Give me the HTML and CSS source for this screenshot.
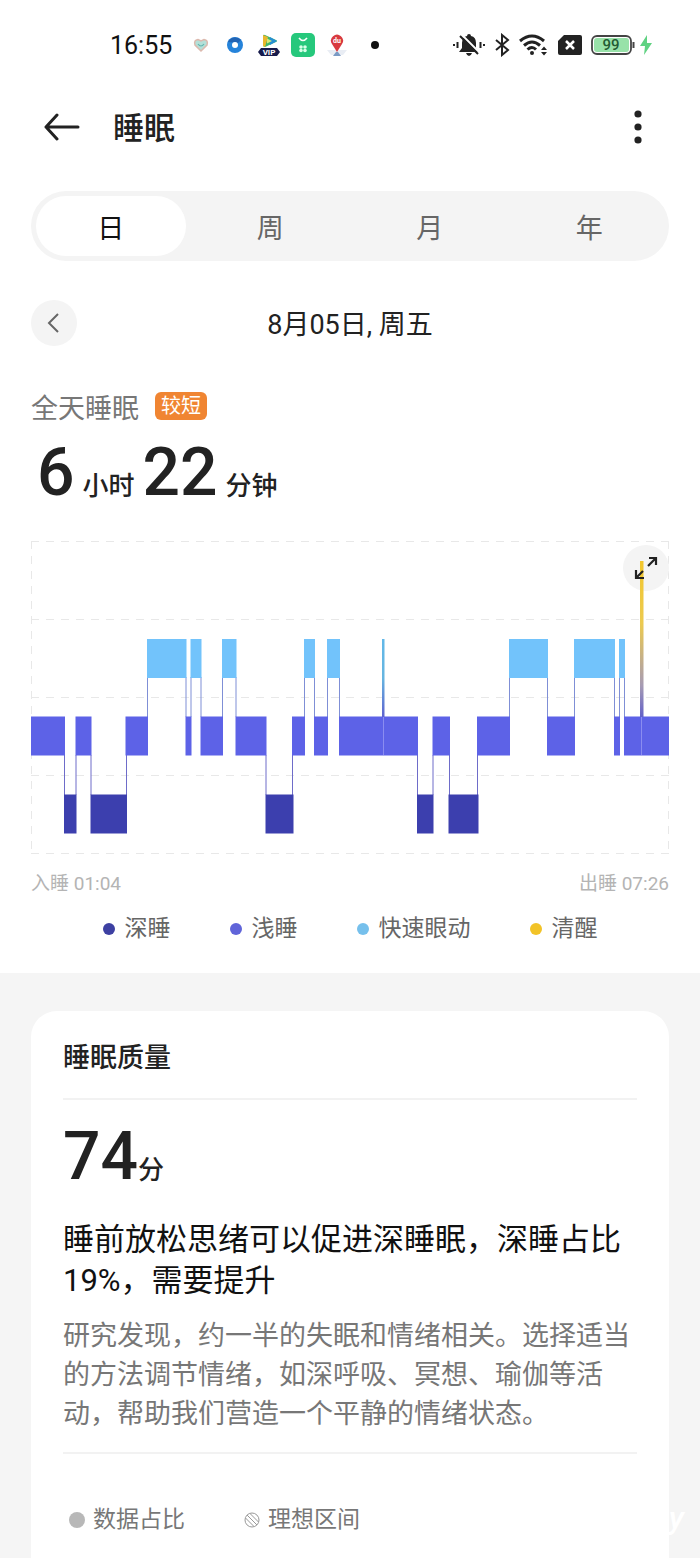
FILE: index.html
```
<!DOCTYPE html>
<html lang="zh-CN">
<head>
    <meta charset="UTF-8">
    <meta name="viewport" content="width=device-width, initial-scale=1.0">
    <title>睡眠</title>
    <link rel="stylesheet" href="styles.css">
</head>
<body>
    <div class="page">
        <section class="overview">
            <div class="status-bar">
                <span class="clock">16:55</span>
                <div class="app-icons">
                    <svg width="24" height="24" viewBox="0 0 24 24">
                        <path d="M12 18 L6 12 Q4.500 7 9 6.500 L12 8 L15 6.500 Q19.500 7 18 12 Z" fill="#b4e0d8" stroke="#dcb9ae" stroke-width="1.500"/>
                        <path d="M9 11 Q12 15 15 11" fill="none" stroke="#62b5ae" stroke-width="1.200"/>
                    </svg>
                    <svg width="24" height="24" viewBox="0 0 24 24">
                        <circle cx="12" cy="12" r="8" fill="#2583da"/>
                        <path d="M5 9 A8 8 0 0 1 18 7 L15 10 Z" fill="#2264b4"/>
                        <circle cx="12" cy="12" r="3" fill="#fff"/>
                    </svg>
                    <svg width="24" height="24" viewBox="0 0 24 24">
                        <path d="M6 3 Q6 1 8 2 L19 7 Q21 8 19 9 L8 14 Q6 14 6 12 Z" fill="#3fb56a"/>
                        <path d="M6 2 L11 4 L8 14 L6 13 Z" fill="#e9b72c"/>
                        <path d="M13 4 L20 8 L13 12 Z" fill="#268fd2"/>
                        <path d="M10 5.500 L15 8 L10 10.500 Z" fill="#d3e87c"/>
                        <path d="M4 15 H20 L23 19 L20 23 H4 L1 19 Z" fill="#171b4b"/>
                        <text x="12" y="22" class="vip-text">VIP</text>
                    </svg>
                    <svg width="24" height="24" viewBox="0 0 24 24">
                        <rect x="0" y="0" width="24" height="24" rx="5" fill="#26c87c"/>
                        <path d="M8 5 Q12 10 16 5" fill="none" stroke="#fff" stroke-width="1.600"/>
                        <g fill="#d8ffe9">
                            <circle cx="10" cy="14" r="1.800"/><circle cx="14" cy="14" r="1.800"/>
                            <circle cx="10" cy="17.500" r="1.800"/><circle cx="14" cy="17.500" r="1.800"/>
                        </g>
                    </svg>
                    <svg width="24" height="24" viewBox="0 0 24 24">
                        <path d="M2 17 L22 17 L18 22 H6 Z" fill="#e9edf4"/>
                        <path d="M12 19 L7 11 A6 6 0 1 1 17 11 Z" fill="#d83a40"/>
                        <path d="M8 23 L11 19 H13 L16 23 Z" fill="#7a9ac4"/>
                        <text x="12" y="10" class="pin-text">du</text>
                    </svg>
                </div>
                <span class="more-dot"></span>
                <div class="system-icons">
                    <svg width="32" height="24" viewBox="0 0 32 24" fill="#222">
                        <path d="M6 19 L9 15 V10 Q9 4 14 3 Q14 1 16 1 Q18 1 18 3 Q23 4 23 10 V15 L26 19 Z M13 20 H19 Q18 23 16 23 Q14 23 13 20 Z"/>
                        <path d="M9 2 L27 20" stroke="#fff" stroke-width="2"/>
                        <path d="M7 3 L25 21 M1 11 V13 M4.500 9 V15 M27.500 9 V15 M31 11 V13" stroke="#222" stroke-width="2" fill="none"/>
                    </svg>
                    <svg width="16" height="24" viewBox="0 0 16 24" fill="none" stroke="#222" stroke-width="2">
                        <path d="M2 7 L14 17 L8 22 V2 L14 7 L2 17"/>
                    </svg>
                    <svg width="30" height="24" viewBox="0 0 30 24" fill="none" stroke="#222" stroke-width="3">
                        <path d="M1 8 Q13 -2 25 8 M5 12.500 Q13 5.500 21 12.500 M8.500 16.500 Q13 12.500 17 16.500"/>
                        <circle cx="13" cy="20" r="2" fill="#222" stroke="none"/>
                        <path d="M22 17 L25 13.500 L28 17 Z M22 19 L25 22.500 L28 19 Z" fill="#222" stroke="none"/>
                    </svg>
                    <svg width="24" height="24" viewBox="0 0 24 24">
                        <path d="M6 2 H22 Q24 2 24 4 V20 Q24 22 22 22 H2 Q0 22 0 20 V8 Z" fill="#222"/>
                        <path d="M8 8 L16 16 M16 8 L8 16" stroke="#fff" stroke-width="2.500"/>
                    </svg>
                    <svg class="battery" width="44" height="24" viewBox="0 0 44 24">
                        <rect x="1" y="3" width="39" height="18" rx="5" fill="#fff" stroke="#444" stroke-width="1.800"/>
                        <rect x="3" y="5" width="35" height="14" rx="3" fill="#98e2a9"/>
                        <path d="M42.500 9 V15" stroke="#444" stroke-width="2"/>
                        <text x="20" y="17" class="battery-text">99</text>
                    </svg>
                    <svg width="14" height="24" viewBox="0 0 14 24">
                        <path d="M8 2 L1 13 H6 L5 22 L13 10 H8 Z" fill="#60d282"/>
                    </svg>
                </div>
            </div>

            <header class="top-bar">
                <button class="icon-button" aria-label="返回">
                    <svg width="36" height="30" viewBox="0 0 36 30" fill="none" stroke="#222" stroke-width="3" stroke-linecap="round" stroke-linejoin="round">
                        <path d="M34 15 H2 M13 3 L2 15 L13 27"/>
                    </svg>
                </button>
                <h1>睡眠</h1>
                <button class="icon-button" aria-label="更多">
                    <svg width="10" height="34" viewBox="0 0 10 34" fill="#222">
                        <circle cx="5" cy="4" r="3.600"/><circle cx="5" cy="17" r="3.600"/><circle cx="5" cy="30" r="3.600"/>
                    </svg>
                </button>
            </header>

            <nav class="tabs">
                <button class="tab active">日</button>
                <button class="tab">周</button>
                <button class="tab">月</button>
                <button class="tab">年</button>
            </nav>

            <div class="date-row">
                <button class="round-button" aria-label="前一天">
                    <svg width="14" height="20" viewBox="0 0 14 20" fill="none" stroke="#666" stroke-width="2">
                        <path d="M11 1 L2 10 L11 19"/>
                    </svg>
                </button>
                <span class="date">8月05日, 周五</span>
            </div>

            <div class="total-label">
                <span>全天睡眠</span>
                <span class="badge">较短</span>
            </div>
            <p class="total-time"><b>6</b><span>小时</span><b>22</b><span>分钟</span></p>

            <div class="chart">
                <svg class="chart-svg" viewBox="0 0 638 313">
                    <defs>
                        <linearGradient id="awakeLine" x1="0" y1="0" x2="0" y2="1">
                            <stop offset="0" stop-color="#f2c62c"/>
                            <stop offset="0.400" stop-color="#ecca50"/>
                            <stop offset="0.800" stop-color="#a69bb4"/>
                            <stop offset="1" stop-color="#6260c8"/>
                        </linearGradient>
                        <linearGradient id="remLine" x1="0" y1="0" x2="0" y2="1">
                            <stop offset="0" stop-color="#62b8e8"/>
                            <stop offset="0.500" stop-color="#66b5e0"/>
                            <stop offset="1" stop-color="#5e62cf"/>
                        </linearGradient>
                    </defs>
                    <path class="grid-line" d="M0 0.500 H638 M0 78.500 H638 M0 156.500 H638 M0 234.500 H638 M0 312.500 H638"/>
                    <path class="grid-line" d="M0.500 0 V313 M637.500 0 V313"/>
                    <!-- transitions between stages -->
                    <path class="link" d="M33.500 214 V254 M45 214 V254 M60 214 V254 M95.500 214 V254 M235 214 V254 M261.500 214 V254 M386.500 214 V254 M402 214 V254 M418.500 214 V254 M446.500 214 V254"/>
                    <path class="link rem-link" d="M116.500 136 V176 M155 136 V176 M160 136 V176 M170 136 V176 M191.500 136 V176 M205 136 V176 M273.500 136 V176 M283.500 136 V176 M296.500 136 V176 M308.500 136 V176 M478.500 136 V176 M516.500 136 V176 M543.500 136 V176 M583.500 136 V176 M588.500 136 V176 M593.500 136 V176"/>
                    <g class="rem">
                        <rect x="116" y="98" width="39.500" height="39"/>
                        <rect x="159.500" y="98" width="11" height="39"/>
                        <rect x="191" y="98" width="14.500" height="39"/>
                        <rect x="273" y="98" width="11" height="39"/>
                        <rect x="296" y="98" width="13" height="39"/>
                        <rect x="478" y="98" width="39" height="39"/>
                        <rect x="543" y="98" width="41" height="39"/>
                        <rect x="588" y="98" width="6" height="39"/>
                    </g>
                    <g class="light">
                        <rect x="0" y="175.500" width="34" height="39"/>
                        <rect x="44.500" y="175.500" width="16" height="39"/>
                        <rect x="94.500" y="175.500" width="22.500" height="39"/>
                        <rect x="154.500" y="175.500" width="6" height="39"/>
                        <rect x="169.500" y="175.500" width="22.500" height="39"/>
                        <rect x="204.500" y="175.500" width="31" height="39"/>
                        <rect x="261" y="175.500" width="13" height="39"/>
                        <rect x="283" y="175.500" width="14" height="39"/>
                        <rect x="308" y="175.500" width="79" height="39"/>
                        <rect x="401.500" y="175.500" width="17.500" height="39"/>
                        <rect x="446" y="175.500" width="33" height="39"/>
                        <rect x="516" y="175.500" width="28" height="39"/>
                        <rect x="583" y="175.500" width="6" height="39"/>
                        <rect x="593" y="175.500" width="45" height="39"/>
                    </g>
                    <g class="deep">
                        <rect x="33" y="253.500" width="12.500" height="39"/>
                        <rect x="59.500" y="253.500" width="36.500" height="39"/>
                        <rect x="234.500" y="253.500" width="28" height="39"/>
                        <rect x="386" y="253.500" width="16.500" height="39"/>
                        <rect x="417.500" y="253.500" width="30" height="39"/>
                    </g>
                    <rect x="351" y="98" width="2.500" height="78" fill="url(#remLine)"/>
                    <path d="M352.500 176 V214 M610.500 176 V214" stroke="#8a8cf0"/>
                    <circle cx="615" cy="27" r="23" fill="#f4f4f4"/>
                    <rect x="609" y="20" width="3.500" height="156" fill="url(#awakeLine)"/>
                </svg>
                <button class="expand" aria-label="全屏">
                    <svg width="24" height="24" viewBox="0 0 24 24" fill="none" stroke="#222" stroke-width="2.200">
                        <path d="M14 10 L22 2 M15 2 H22 V9 M9 15 L2 22 M2 14 V22 H10"/>
                    </svg>
                </button>
            </div>
            <div class="axis">
                <span>入睡 01:04</span>
                <span>出睡 07:26</span>
            </div>
            <ul class="legend">
                <li><i class="dot dot-deep"></i>深睡</li>
                <li><i class="dot dot-light"></i>浅睡</li>
                <li><i class="dot dot-rem"></i>快速眼动</li>
                <li><i class="dot dot-awake"></i>清醒</li>
            </ul>
        </section>

        <section class="quality">
            <h2>睡眠质量</h2>
            <p class="score"><b>74</b><span>分</span></p>
            <h3>睡前放松思绪可以促进深睡眠，深睡占比19%，需要提升</h3>
            <p class="advice">研究发现，约一半的失眠和情绪相关。选择适当的方法调节情绪，如深呼吸、冥想、瑜伽等活动，帮助我们营造一个平静的情绪状态。</p>
            <ul class="ratio-legend">
                <li><i class="dot dot-data"></i>数据占比</li>
                <li>
                    <svg width="16" height="16" viewBox="0 0 16 16" fill="none" stroke="#999" stroke-width="1">
                        <circle cx="8" cy="8" r="7"/>
                        <path d="M1.500 6 L10 14.500 M3 3 L13 13 M6 1.500 L14.500 10"/>
                    </svg>
                    理想区间
                </li>
            </ul>
        </section>
        <span class="watermark">y</span>
    </div>
</body>
</html>
```
FILE: styles.css
```
* {
    box-sizing: border-box;
}
body {
    margin: 0;
    background-color: #f5f5f5;
    color: #222;
    font-family: Roboto, "Noto Sans CJK SC", sans-serif;
    font-size: 27px;
}
h1, h2, h3, p, ul {
    margin: 0;
    padding: 0;
    font-weight: 500;
}
ul {
    list-style: none;
}
button {
    border: none;
    padding: 0;
    background: none;
    color: inherit;
    font: inherit;
    cursor: pointer;
}
svg {
    display: block;
    flex-shrink: 0;
}
.page {
    position: relative;
    min-height: 100vh;
}
.overview {
    background-color: #fff;
    padding: 24px 31px 26px;
}

/* status bar */
.status-bar {
    display: flex;
    align-items: center;
    height: 42px;
    padding: 0 16px 0 79px;
}
.clock {
    color: #111;
    font-size: 25px;
}
.app-icons {
    display: flex;
    gap: 10px;
    margin-left: 17px;
}
.more-dot {
    width: 8px;
    height: 8px;
    margin-left: 22px;
    border-radius: 50%;
    background-color: #111;
}
.system-icons {
    display: flex;
    align-items: center;
    margin-left: auto;
    gap: 9px;
}
.system-icons .battery {
    margin-right: -5px;
}
.vip-text, .pin-text, .battery-text {
    font-weight: 700;
    text-anchor: middle;
    fill: #fff;
}
.vip-text {
    font-size: 8px;
}
.pin-text {
    font-size: 7px;
}
.battery-text {
    font-size: 15px;
    font-weight: 500;
    fill: #235b33;
}

/* header */
.top-bar {
    display: flex;
    align-items: center;
    height: 60px;
    margin-top: 31px;
    padding: 0 26px 0 13px;
}
.top-bar h1 {
    flex: 1;
    margin-left: 33px;
    padding-top: 4px;
    font-size: 31px;
    line-height: 40px;
}
.tabs {
    display: grid;
    grid-template-columns: repeat(4, 1fr);
    height: 70px;
    margin-top: 34px;
    border-radius: 35px;
    background-color: #f4f4f4;
}
.tab {
    margin: 5px;
    border-radius: 30px;
    color: #666;
}
.tab.active {
    background-color: #fff;
    color: #111;
}
.date-row {
    display: grid;
    grid-template-columns: 46px 1fr 46px;
    align-items: center;
    margin-top: 39px;
}
.round-button {
    display: flex;
    align-items: center;
    justify-content: center;
    width: 46px;
    height: 46px;
    border-radius: 50%;
    background-color: #f4f4f4;
}
.date {
    padding-top: 4px;
    text-align: center;
    line-height: 40px;
}

/* total sleep */
.total-label {
    display: flex;
    align-items: center;
    gap: 16px;
    height: 40px;
    margin-top: 40px;
    color: #777;
}
.badge {
    padding: 0 6px;
    border-radius: 6px;
    background-color: #f08532;
    color: #fff;
    font-size: 20px;
    line-height: 28px;
}
.total-time {
    display: flex;
    align-items: baseline;
    gap: 8px;
    margin-top: 8px;
    padding-left: 6px;
    font-size: 26px;
    line-height: 78px;
}
.total-time b, .score b {
    font-size: 66px;
    font-weight: 500;
}

/* sleep stages chart */
.chart {
    position: relative;
    margin-top: 16px;
}
.chart-svg {
    width: 100%;
    height: auto;
}
.grid-line {
    fill: none;
    stroke: #e8e8e8;
    stroke-width: 1;
    stroke-dasharray: 8 7;
}
.link {
    stroke: #6e6cc9;
    stroke-width: 1;
}
.rem-link {
    stroke: #7f8fd6;
}
.deep {
    fill: #3c3fae;
}
.light {
    fill: #5d62e7;
}
.rem {
    fill: #72c3fb;
}
.expand {
    position: absolute;
    top: 4px;
    right: 0;
    display: flex;
    align-items: center;
    justify-content: center;
    width: 46px;
    height: 46px;
    border-radius: 50%;
}
.axis {
    display: flex;
    justify-content: space-between;
    margin-top: 15px;
    color: #b4b4b4;
    font-size: 19px;
    line-height: 30px;
}
.legend {
    display: flex;
    justify-content: center;
    gap: 59px;
    margin-top: 12px;
    color: #666;
    font-size: 23px;
    line-height: 36px;
}
.legend li, .ratio-legend li {
    display: flex;
    align-items: center;
    gap: 10px;
    font-weight: 400;
}
.dot {
    width: 12px;
    height: 12px;
    border-radius: 50%;
}
.dot-deep {
    background-color: #3d40a2;
}
.dot-light {
    background-color: #6064d9;
}
.dot-rem {
    background-color: #76c0ec;
}
.dot-awake {
    background-color: #f2c327;
}

/* quality card */
.quality {
    margin: 38px 31px 0;
    padding: 27px 32px 20px;
    border-radius: 26px 26px 0 0;
    background-color: #fff;
}
.quality h2 {
    padding-bottom: 20px;
    border-bottom: 2px solid #f2f2f2;
    font-size: 27px;
    line-height: 40px;
}
.score {
    display: flex;
    align-items: baseline;
    margin-top: 18px;
    font-size: 26px;
    line-height: 78px;
}
.quality h3 {
    margin-top: 10px;
    color: #111;
    font-size: 31px;
    font-weight: 400;
    line-height: 41px;
}
.advice {
    margin-top: 16px;
    padding-bottom: 18px;
    border-bottom: 2px solid #f2f2f2;
    color: #777;
    font-weight: 400;
    line-height: 39px;
}
.ratio-legend {
    display: flex;
    gap: 59px;
    margin-top: 48px;
    padding-left: 6px;
    color: #777;
    font-size: 23px;
    line-height: 36px;
}
.ratio-legend li {
    gap: 8px;
}
.dot-data {
    width: 16px;
    height: 16px;
    background-color: #b8b8b8;
}
.watermark {
    position: absolute;
    right: 16px;
    bottom: 20px;
    color: #fff;
    font-size: 32px;
    font-style: italic;
    font-weight: 500;
    line-height: 40px;
}
```
